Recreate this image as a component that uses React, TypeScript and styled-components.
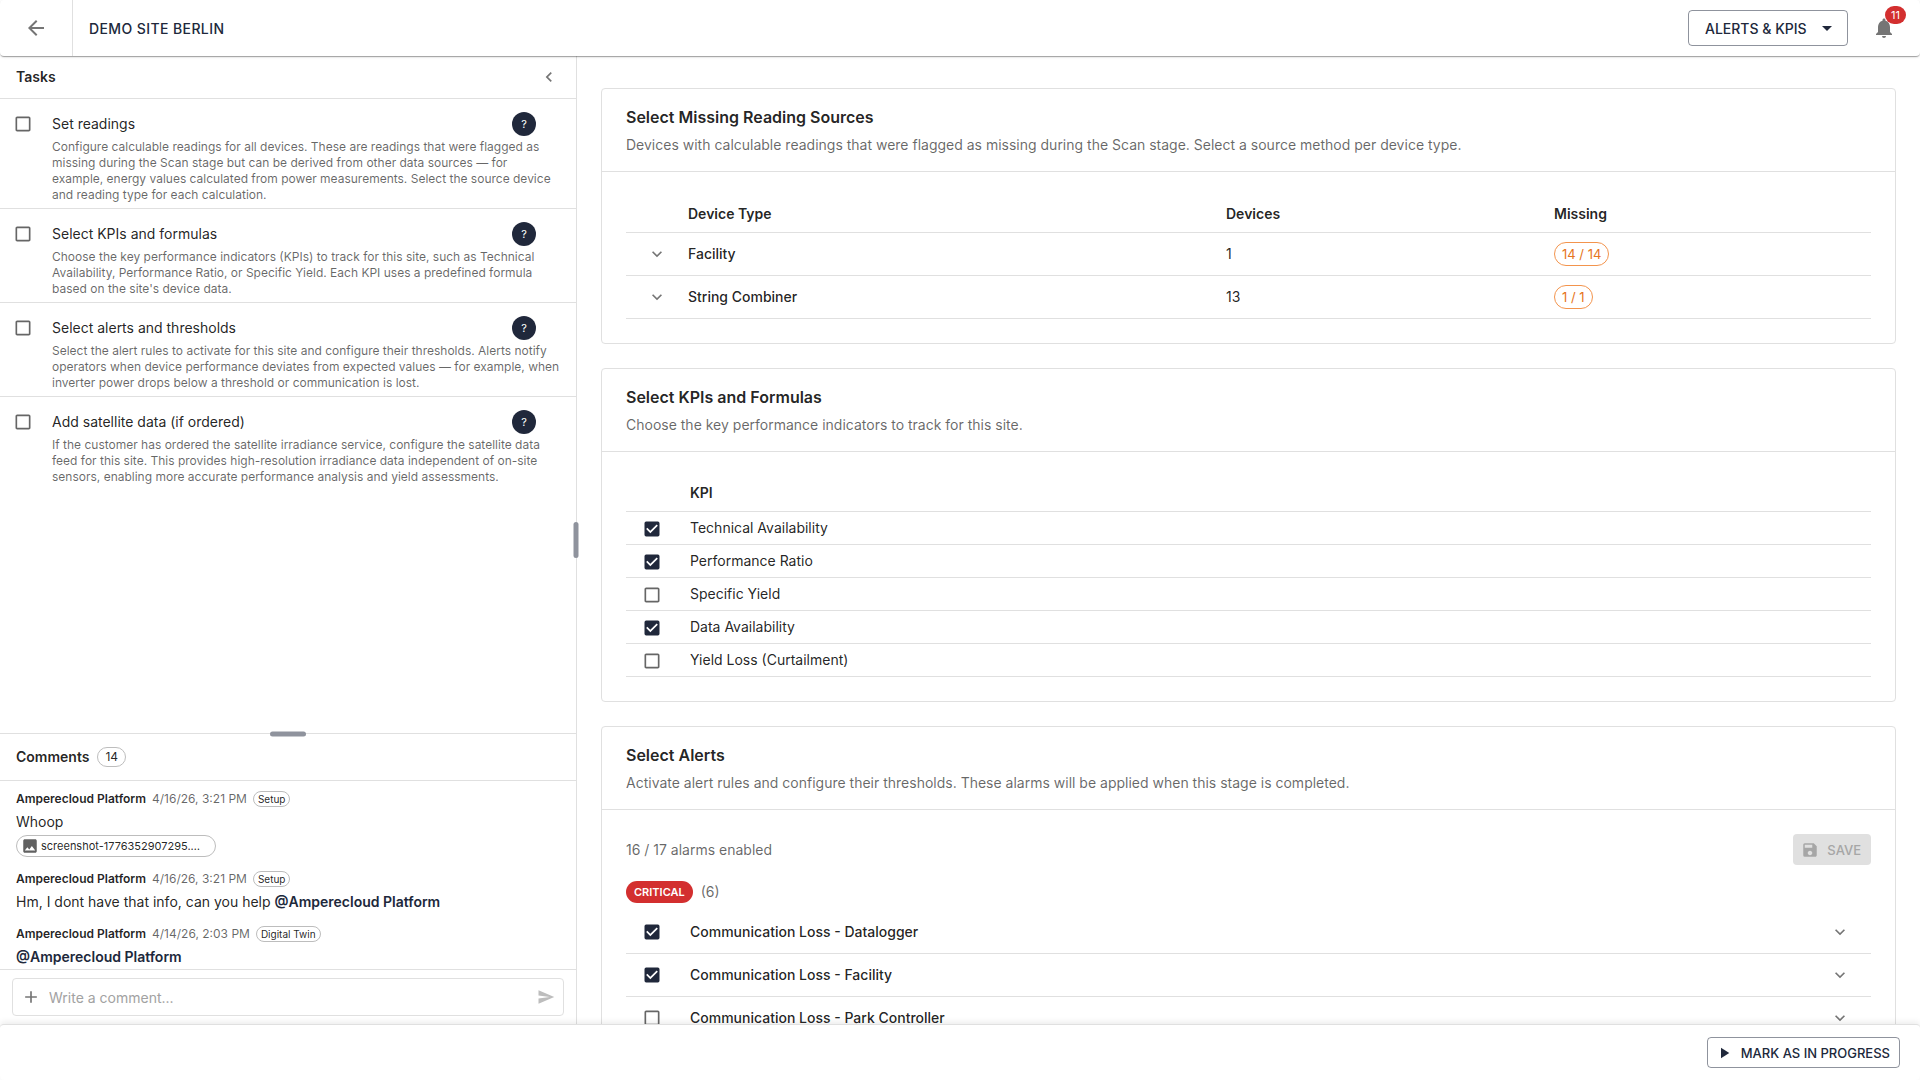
import React, { useId, useState } from 'react';
import styled, { createGlobalStyle } from 'styled-components';
import {
  MdArrowBack,
  MdArrowDropDown,
  MdAdd,
  MdCheckBox,
  MdCheckBoxOutlineBlank,
  MdChevronLeft,
  MdImage,
  MdNotifications,
  MdPlayArrow,
  MdSave,
  MdSend,
} from 'react-icons/md';

interface Task {
  title: string;
  description: string;
}

interface Comment {
  date: string;
  stage: string;
  text?: string;
  mention?: string;
  attachment?: string;
}

const navy = '#20283b';
const textPrimary = 'rgba(0, 0, 0, 0.87)';
const textSecondary = 'rgba(0, 0, 0, 0.6)';
const iconGrey = '#757575';
const divider = '#e0e0e0';

const tasks: Task[] = [
  {
    title: 'Set readings',
    description:
      'Configure calculable readings for all devices. These are readings that were flagged as missing during the Scan stage but can be derived from other data sources — for example, energy values calculated from power measurements. Select the source device and reading type for each calculation.',
  },
  {
    title: 'Select KPIs and formulas',
    description:
      "Choose the key performance indicators (KPIs) to track for this site, such as Technical Availability, Performance Ratio, or Specific Yield. Each KPI uses a predefined formula based on the site's device data.",
  },
  {
    title: 'Select alerts and thresholds',
    description:
      'Select the alert rules to activate for this site and configure their thresholds. Alerts notify operators when device performance deviates from expected values — for example, when inverter power drops below a threshold or communication is lost.',
  },
  {
    title: 'Add satellite data (if ordered)',
    description:
      'If the customer has ordered the satellite irradiance service, configure the satellite data feed for this site. This provides high-resolution irradiance data independent of on-site sensors, enabling more accurate performance analysis and yield assessments.',
  },
];

const comments: Comment[] = [
  { date: '4/16/26, 3:21 PM', stage: 'Setup', text: 'Whoop', attachment: 'screenshot-1776352907295.png' },
  {
    date: '4/16/26, 3:21 PM',
    stage: 'Setup',
    text: 'Hm, I dont have that info, can you help ',
    mention: '@Amperecloud Platform',
  },
  { date: '4/14/26, 2:03 PM', stage: 'Digital Twin', mention: '@Amperecloud Platform' },
];

const devices = [
  { type: 'Facility', count: 1, missing: '14 / 14' },
  { type: 'String Combiner', count: 13, missing: '1 / 1' },
];

const kpis = [
  { name: 'Technical Availability', active: true },
  { name: 'Performance Ratio', active: true },
  { name: 'Specific Yield', active: false },
  { name: 'Data Availability', active: true },
  { name: 'Yield Loss (Curtailment)', active: false },
];

const alerts = [
  { name: 'Communication Loss - Datalogger', active: true },
  { name: 'Communication Loss - Facility', active: true },
  { name: 'Communication Loss - Park Controller', active: false },
];

const GlobalStyle = createGlobalStyle`
  * {
    box-sizing: border-box;
  }

  body {
    margin: 0;
    background: #fff;
    color: ${textPrimary};
    font-family: Inter, sans-serif;
    font-size: 14px;
    line-height: 20px;
    -webkit-font-smoothing: antialiased;
  }

  h1, h2, h3, p, ul {
    margin: 0;
    padding: 0;
  }

  button, input, select {
    font-family: inherit;
  }
`;

const Page = styled.div`
  display: flex;
  flex-direction: column;
  height: 100vh;
  overflow: hidden;
`;

const TopBar = styled.header`
  display: flex;
  align-items: center;
  flex: none;
  height: 56px;
  padding-right: 16px;
  background: #fff;
  border-radius: 4px;
  box-shadow: 0 2px 1px -1px rgba(0, 0, 0, 0.2), 0 1px 1px rgba(0, 0, 0, 0.14), 0 1px 3px rgba(0, 0, 0, 0.12);
  z-index: 2;
`;

const IconButton = styled.button`
  display: inline-flex;
  align-items: center;
  justify-content: center;
  padding: 0;
  border: 0;
  background: none;
  color: ${iconGrey};
  cursor: pointer;
`;

const BackButton = styled(IconButton)`
  width: 73px;
  height: 56px;
  border-right: 1px solid ${divider};
`;

const SiteTitle = styled.h1`
  flex: 1;
  padding: 2px 0 0 16px;
  color: ${navy};
  font-size: 14px;
  font-weight: 500;
  letter-spacing: 0.4px;
  text-transform: uppercase;
`;

const StageSelect = styled.div`
  display: grid;
  align-items: center;
  width: 160px;
  height: 36px;
  border: 1px solid rgba(32, 40, 59, 0.5);
  border-radius: 4px;
  color: ${navy};

  > * {
    grid-area: 1 / 1;
  }

  > svg {
    justify-self: end;
    margin-right: 8px;
    pointer-events: none;
  }
`;

const StageOptions = styled.select`
  width: 100%;
  height: 100%;
  padding: 0 16px;
  border: 0;
  background: none;
  appearance: none;
  color: inherit;
  font-size: 14px;
  font-weight: 500;
`;

const Bell = styled(IconButton)`
  position: relative;
  width: 24px;
  height: 24px;
  margin: 0 8px 0 24px;
`;

const BellCount = styled.span`
  position: absolute;
  top: -10px;
  right: -10px;
  min-width: 20px;
  padding: 0 6px;
  border-radius: 10px;
  background: #d32f2f;
  color: #fff;
  font-size: 11px;
  line-height: 18px;
  text-align: center;
`;

const Content = styled.div`
  display: flex;
  flex: 1;
  min-height: 0;
`;

const Sidebar = styled.aside`
  position: relative;
  display: flex;
  flex-direction: column;
  flex: none;
  width: 30%;
  min-width: 0;
`;

const ResizeHandle = styled.span<{ $vertical?: boolean }>`
  position: absolute;
  width: ${({ $vertical }) => ($vertical ? '5px' : '36px')};
  height: ${({ $vertical }) => ($vertical ? '36px' : '5px')};
  top: ${({ $vertical }) => ($vertical ? '50%' : '0')};
  left: ${({ $vertical }) => ($vertical ? '100%' : '50%')};
  transform: translate(-50%, -50%);
  border-radius: 3px;
  background: #8f939d;
  z-index: 1;
`;

const TaskPanel = styled.section`
  flex: 1;
  min-height: 0;
  overflow: hidden;
`;

const PanelHeader = styled.div<{ $height: number }>`
  display: flex;
  align-items: center;
  gap: 8px;
  height: ${({ $height }) => $height}px;
  padding: 0 15px 0 16px;
  border-bottom: 1px solid ${divider};
`;

const PanelTitle = styled.h2`
  font-size: 14px;
  font-weight: 600;
`;

const CollapseButton = styled(IconButton)`
  width: 24px;
  height: 24px;
  margin-left: auto;
`;

const TaskList = styled.ul`
  list-style: none;
`;

const TaskItem = styled.li`
  display: flex;
  padding: 12px 16px 5px 13px;

  &:not(:last-child) {
    border-bottom: 1px solid ${divider};
  }
`;

const TaskCheck = styled.div`
  display: flex;
  align-items: center;
  height: 26px;
`;

const TaskBody = styled.div`
  flex: 1;
  min-width: 0;
  padding-left: 19px;
`;

const TaskTop = styled.div`
  display: flex;
  align-items: center;
  justify-content: space-between;
  height: 26px;
  padding-right: 24px;
`;

const TaskTitle = styled.label`
  font-size: 14px;
`;

const HelpButton = styled.button`
  width: 24px;
  height: 24px;
  padding: 0;
  border: 0;
  border-radius: 50%;
  background: ${navy};
  color: #fff;
  font-size: 11px;
`;

const TaskDescription = styled.p`
  padding-top: 2px;
  color: ${textSecondary};
  font-size: 12px;
  line-height: 16px;
`;

const CheckWrap = styled.span<{ $size: number; $checked: boolean }>`
  display: inline-grid;
  flex: none;
  width: ${({ $size }) => $size}px;
  height: ${({ $size }) => $size}px;
  color: ${({ $checked }) => ($checked ? navy : '#666')};
  vertical-align: middle;

  > * {
    grid-area: 1 / 1;
    width: 100%;
    height: 100%;
    margin: 0;
  }

  > input {
    opacity: 0;
    cursor: pointer;
  }
`;

const CommentPanel = styled.section`
  position: relative;
  display: flex;
  flex-direction: column;
  flex: none;
  height: 30%;
  min-height: 291px;
  border-top: 1px solid ${divider};
`;

const CountChip = styled.span`
  padding: 0 7px;
  border: 1px solid #bdbdbd;
  border-radius: 10px;
  font-size: 12px;
  line-height: 18px;
`;

const CommentList = styled.div`
  display: flex;
  flex-direction: column;
  flex: 1;
  gap: 12px;
  min-height: 0;
  padding: 8px 16px 0;
  overflow: hidden;
`;

const CommentItem = styled.article`
  flex: none;
`;

const CommentMeta = styled.div`
  display: flex;
  align-items: center;
  gap: 6px;
  height: 20px;
  color: ${textSecondary};
  font-size: 12px;
`;

const Author = styled.span`
  color: ${textPrimary};
  font-weight: 600;
`;

const StageChip = styled.span`
  padding: 0 4px;
  border: 1px solid #bdbdbd;
  border-radius: 8px;
  color: ${textPrimary};
  font-size: 10px;
  line-height: 14px;
`;

const CommentText = styled.p`
  padding-top: 3px;
`;

const Mention = styled.span`
  color: ${navy};
  font-weight: 600;
`;

const Attachment = styled.button`
  display: flex;
  align-items: center;
  gap: 2px;
  width: 200px;
  height: 22px;
  margin-top: 3px;
  padding: 0 12px 0 4px;
  border: 1px solid #bdbdbd;
  border-radius: 11px;
  background: none;
  color: ${textPrimary};
  font-size: 11px;

  svg {
    flex: none;
    color: #616161;
  }

  span {
    overflow: hidden;
    text-overflow: ellipsis;
    white-space: nowrap;
  }
`;

const Composer = styled.div`
  padding: 8px 12px;
  border-top: 1px solid ${divider};
`;

const ComposerBox = styled.div`
  display: flex;
  align-items: center;
  gap: 8px;
  height: 38px;
  padding: 0 8px;
  border: 1px solid ${divider};
  border-radius: 4px;
`;

const ComposerInput = styled.input`
  flex: 1;
  min-width: 0;
  padding: 0;
  border: 0;
  outline: 0;
  color: ${textPrimary};
  font-size: 14px;

  &::placeholder {
    color: #a2a2a2;
    opacity: 1;
  }
`;

const Main = styled.main`
  display: flex;
  flex-direction: column;
  flex: 1;
  gap: 24px;
  min-width: 0;
  padding: 32px 24px 0;
  border-left: 1px solid ${divider};
  overflow: hidden;
`;

const Card = styled.section`
  flex: none;
  border: 1px solid ${divider};
  border-radius: 4px;
`;

const CardHeader = styled.div`
  padding: 16px 24px;
  border-bottom: 1px solid ${divider};
`;

const CardTitle = styled.h2`
  font-size: 16px;
  font-weight: 600;
  line-height: 24px;
`;

const CardSubtitle = styled.p`
  padding: 6px 0 0;
  color: ${textSecondary};
`;

const CardBody = styled.div`
  padding: 24px;
`;

const Table = styled.table`
  width: 100%;
  border-collapse: collapse;
  table-layout: fixed;
`;

const Row = styled.tr<{ $height: number }>`
  height: ${({ $height }) => $height}px;
  border-bottom: 1px solid ${divider};
`;

const HeadCell = styled.th<{ $width?: string }>`
  width: ${({ $width }) => $width || 'auto'};
  padding: 0;
  font-weight: 600;
  text-align: left;
`;

const Cell = styled.td<{ $medium?: boolean; $check?: boolean }>`
  padding: ${({ $check }) => ($check ? '0 0 0 16px' : '0')};
  font-weight: ${({ $medium }) => ($medium ? 500 : 400)};
  line-height: 20px;
`;

const ExpandButton = styled(IconButton)`
  display: flex;
  width: 20px;
  height: 20px;
  margin-left: 21px;
`;

const MissingChip = styled.span`
  display: inline-block;
  padding: 0 7px;
  border: 1px solid #f3944d;
  border-radius: 12px;
  color: #e67420;
  font-size: 13px;
  line-height: 22px;
  vertical-align: middle;
`;

const Summary = styled.div`
  display: flex;
  align-items: center;
  justify-content: space-between;
  color: ${textSecondary};
`;

const SaveButton = styled.button`
  display: flex;
  align-items: center;
  gap: 8px;
  height: 31px;
  padding: 0 10px 0 8px;
  border: 0;
  border-radius: 4px;
  background: #e0e0e0;
  color: #a6a6a6;
  font-size: 13px;
  font-weight: 500;
`;

const Severity = styled.div`
  display: flex;
  align-items: center;
  gap: 8px;
  padding: 16px 0 8px;
  color: ${textSecondary};
`;

const SeverityChip = styled.h3`
  padding: 0 8px;
  border-radius: 11px;
  background: #d32f2f;
  color: #fff;
  font-size: 11px;
  font-weight: 600;
  line-height: 22px;
`;

const AlertRow = styled.div`
  display: flex;
  align-items: center;
  height: 43px;
  padding: 0 21px 0 16px;
  border-bottom: 1px solid ${divider};
`;

const AlertName = styled.label`
  flex: 1;
  padding-left: 28px;
  font-weight: 500;
`;

const Footer = styled.footer`
  display: flex;
  align-items: center;
  justify-content: flex-end;
  flex: none;
  height: 56px;
  padding: 0 20px;
  border-top: 1px solid ${divider};
  border-radius: 4px;
  background: #fff;
  box-shadow: 0 -2px 6px rgba(0, 0, 0, 0.08);
  z-index: 2;
`;

const ProgressButton = styled.button`
  display: flex;
  align-items: center;
  gap: 8px;
  height: 31px;
  padding: 0 9px 0 7px;
  border: 1px solid rgba(32, 40, 59, 0.5);
  border-radius: 4px;
  background: none;
  color: ${navy};
  font-size: 13px;
  font-weight: 500;
`;

const Chevron: React.FC = () => (
  <svg width="20" height="20" viewBox="0 0 24 24" fill="currentColor" aria-hidden="true">
    <path d="M7.41 8.59 12 13.17l4.59-4.58L18 10l-6 6-6-6z" />
  </svg>
);

interface CheckboxProps {
  id: string;
  size: number;
  defaultChecked?: boolean;
}

const Checkbox: React.FC<CheckboxProps> = ({ id, size, defaultChecked = false }) => {
  const [checked, setChecked] = useState(defaultChecked);
  return (
    <CheckWrap $size={size} $checked={checked}>
      {checked ? <MdCheckBox /> : <MdCheckBoxOutlineBlank />}
      <input id={id} type="checkbox" checked={checked} onChange={(e) => setChecked(e.target.checked)} />
    </CheckWrap>
  );
};

const TaskEntry: React.FC<{ task: Task }> = ({ task }) => {
  const id = useId();
  return (
    <TaskItem>
      <TaskCheck>
        <Checkbox id={id} size={20} />
      </TaskCheck>
      <TaskBody>
        <TaskTop>
          <TaskTitle htmlFor={id}>{task.title}</TaskTitle>
          <HelpButton aria-label={`Help: ${task.title}`}>?</HelpButton>
        </TaskTop>
        <TaskDescription>{task.description}</TaskDescription>
      </TaskBody>
    </TaskItem>
  );
};

const CommentEntry: React.FC<{ comment: Comment }> = ({ comment }) => (
  <CommentItem>
    <CommentMeta>
      <Author>Amperecloud Platform</Author>
      <span>{comment.date}</span>
      <StageChip>{comment.stage}</StageChip>
    </CommentMeta>
    <CommentText>
      {comment.text}
      {comment.mention && <Mention>{comment.mention}</Mention>}
    </CommentText>
    {comment.attachment && (
      <Attachment>
        <MdImage size={18} />
        <span>{comment.attachment}</span>
      </Attachment>
    )}
  </CommentItem>
);

const App: React.FC = () => {
  return (
    <Page>
      <GlobalStyle />
      <TopBar>
        <BackButton aria-label="Back">
          <MdArrowBack size={24} />
        </BackButton>
        <SiteTitle>Demo Site Berlin</SiteTitle>
        <StageSelect>
          <StageOptions aria-label="Stage">
            <option>ALERTS &amp; KPIS</option>
          </StageOptions>
          <MdArrowDropDown size={24} />
        </StageSelect>
        <Bell aria-label="Notifications">
          <MdNotifications size={24} />
          <BellCount>11</BellCount>
        </Bell>
      </TopBar>

      <Content>
        <Sidebar>
          <TaskPanel>
            <PanelHeader $height={43}>
              <PanelTitle>Tasks</PanelTitle>
              <CollapseButton aria-label="Collapse panel">
                <MdChevronLeft size={20} />
              </CollapseButton>
            </PanelHeader>
            <TaskList>
              {tasks.map((task) => (
                <TaskEntry key={task.title} task={task} />
              ))}
            </TaskList>
          </TaskPanel>

          <CommentPanel>
            <ResizeHandle />
            <PanelHeader $height={47}>
              <PanelTitle>Comments</PanelTitle>
              <CountChip>14</CountChip>
            </PanelHeader>
            <CommentList>
              {comments.map((comment, index) => (
                <CommentEntry key={index} comment={comment} />
              ))}
            </CommentList>
            <Composer>
              <ComposerBox>
                <IconButton aria-label="Add attachment">
                  <MdAdd size={20} />
                </IconButton>
                <ComposerInput aria-label="Comment" placeholder="Write a comment..." />
                <IconButton aria-label="Send">
                  <MdSend size={18} color="#bdbdbd" />
                </IconButton>
              </ComposerBox>
            </Composer>
          </CommentPanel>
          <ResizeHandle $vertical />
        </Sidebar>

        <Main>
          <Card>
            <CardHeader>
              <CardTitle>Select Missing Reading Sources</CardTitle>
              <CardSubtitle>
                Devices with calculable readings that were flagged as missing during the Scan stage. Select a source
                method per device type.
              </CardSubtitle>
            </CardHeader>
            <CardBody>
              <Table>
                <thead>
                  <Row $height={36}>
                    <HeadCell $width="62px" />
                    <HeadCell>Device Type</HeadCell>
                    <HeadCell $width="328px">Devices</HeadCell>
                    <HeadCell $width="317px">Missing</HeadCell>
                  </Row>
                </thead>
                <tbody>
                  {devices.map((device) => (
                    <Row key={device.type} $height={43}>
                      <Cell>
                        <ExpandButton aria-label={`Expand ${device.type}`}>
                          <Chevron />
                        </ExpandButton>
                      </Cell>
                      <Cell $medium>{device.type}</Cell>
                      <Cell>{device.count}</Cell>
                      <Cell>
                        <MissingChip>{device.missing}</MissingChip>
                      </Cell>
                    </Row>
                  ))}
                </tbody>
              </Table>
            </CardBody>
          </Card>

          <Card>
            <CardHeader>
              <CardTitle>Select KPIs and Formulas</CardTitle>
              <CardSubtitle>Choose the key performance indicators to track for this site.</CardSubtitle>
            </CardHeader>
            <CardBody>
              <Table>
                <thead>
                  <Row $height={36}>
                    <HeadCell $width="64px" />
                    <HeadCell>KPI</HeadCell>
                  </Row>
                </thead>
                <tbody>
                  {kpis.map((kpi) => (
                    <Row key={kpi.name} $height={33}>
                      <Cell $check>
                        <Checkbox id={kpi.name} size={20} defaultChecked={kpi.active} />
                      </Cell>
                      <Cell>
                        <label htmlFor={kpi.name}>{kpi.name}</label>
                      </Cell>
                    </Row>
                  ))}
                </tbody>
              </Table>
            </CardBody>
          </Card>

          <Card>
            <CardHeader>
              <CardTitle>Select Alerts</CardTitle>
              <CardSubtitle>
                Activate alert rules and configure their thresholds. These alarms will be applied when this stage is
                completed.
              </CardSubtitle>
            </CardHeader>
            <CardBody>
              <Summary>
                <span>16 / 17 alarms enabled</span>
                <SaveButton disabled>
                  <MdSave size={18} />
                  SAVE
                </SaveButton>
              </Summary>
              <Severity>
                <SeverityChip>CRITICAL</SeverityChip>
                <span>(6)</span>
              </Severity>
              {alerts.map((alert) => (
                <AlertRow key={alert.name}>
                  <Checkbox id={alert.name} size={20} defaultChecked={alert.active} />
                  <AlertName htmlFor={alert.name}>{alert.name}</AlertName>
                  <IconButton aria-label={`Expand ${alert.name}`}>
                    <Chevron />
                  </IconButton>
                </AlertRow>
              ))}
            </CardBody>
          </Card>
        </Main>
      </Content>

      <Footer>
        <ProgressButton>
          <MdPlayArrow size={18} />
          MARK AS IN PROGRESS
        </ProgressButton>
      </Footer>
    </Page>
  );
};

export default App;
